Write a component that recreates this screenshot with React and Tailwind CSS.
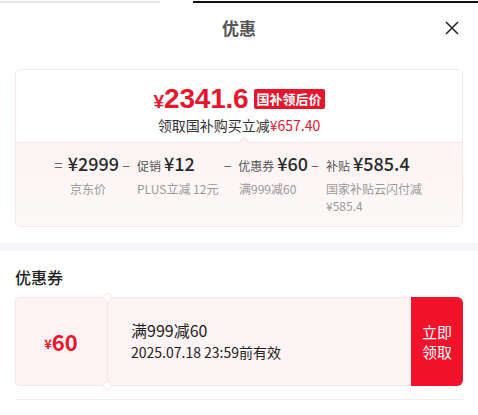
import React from "react";

const F = { fontFamily: '"Noto Sans CJK SC", "Noto Sans", sans-serif' };
const A = { fontFamily: '"Liberation Sans", Arial, sans-serif' };

function Col({ op, label, value, sub, w }) {
  return (
    <div className={`flex flex-col ${w}`}>
      <div className="flex items-baseline whitespace-nowrap text-[#333]">
        <span className="text-[15px] text-[#666] w-[14px] text-center">{op}</span>
        {label && <span className="ml-[4px] text-[12px] text-[#555]">{label}</span>}
        <span className="ml-[3px] text-[18px] leading-[24px] font-medium text-[#2a2a2a]">{value}</span>
      </div>
      <div className="pl-[18px] text-[12px] leading-[17px] mt-[3px] text-[#9a9a9a]">{sub}</div>
    </div>
  );
}

export default function App() {
  return (
    <div style={F} className="w-[478px] h-[415px] bg-white overflow-hidden relative">
      {/* top strip */}
      <div className="flex h-[3px]">
        <div className="w-[160px] h-[2px] mt-[1px] bg-[#e6e6e6]" />
        <div className="w-[33px]" />
        <div className="flex-1 h-[2px] mt-[1px] bg-[#111]" />
      </div>
      {/* header */}
      <div className="h-[50px] flex items-center justify-center relative">
        <span className="text-[17px] font-bold text-[#555]">优惠</span>
        <svg className="absolute right-[18px] top-[17px]" width="16" height="16" viewBox="0 0 16 16">
          <path d="M2 2L14 14M14 2L2 14" stroke="#222" strokeWidth="1.5" />
        </svg>
      </div>
      {/* price card */}
      <div className="mx-[15px] mt-[16px] rounded-[6px] border border-[#f2e6e8] overflow-hidden">
        <div className="h-[72px] bg-white flex flex-col items-center pt-[16px]">
          <div className="flex items-center h-[26px]">
            <span style={A} className="text-[19px] font-bold text-[#e8162c] leading-[18px] mt-[5px]">¥</span>
            <span style={A} className="text-[28px] font-bold text-[#e8162c] leading-[26px] tracking-[-0.2px]">2341.6</span>
            <span className="ml-[5px] bg-[#e8162c] text-white text-[13px] font-bold rounded-[2px] px-[3px] h-[20px] leading-[20px]">国补领后价</span>
          </div>
          <div className="text-[14px] leading-[16px] text-[#333] mt-[5px]">
            领取国补购买立减<span className="text-[#e8162c]">¥657.40</span>
          </div>
        </div>
        <div className="relative h-[84px] bg-gradient-to-b from-[#fdf3f3] to-[#fdf9f9] border-t border-[#f6e8e9] pt-[8px] pl-[36px] flex">
          <div className="absolute left-[224px] -top-[5px] w-[8px] h-[8px] rotate-45 bg-[#fdf3f3] border-l border-t border-[#f6e8e9]" />
          <Col w="w-[67px]" op="=" value="¥2999" sub="京东价" />
          <Col w="w-[102px]" op="–" label="促销" value="¥12" sub="PLUS立减 12元" />
          <Col w="w-[87px]" op="–" label="优惠券" value="¥60" sub="满999减60" />
          <Col w="w-[120px]" op="–" label="补贴" value="¥585.4" sub={<>国家补贴云闪付减<br />¥585.4</>} />
        </div>
      </div>
      {/* gray band */}
      <div className="mt-[16px] h-[8px] bg-[#f5f6fa]" />
      {/* coupons */}
      <div className="px-[15px]">
        <div className="h-[46px] flex items-center text-[16px] font-medium text-[#222] pt-[6px]">优惠券</div>
        <div className="h-[89px] flex">
          <div className="w-[91px] bg-[#fdf3f4] border border-[#f6e6e8] border-r-0 rounded-l-[5px] flex items-center justify-center text-[#e8162c] font-bold">
            <span className="text-[13px] mt-[4px]">¥</span>
            <span className="text-[22px]">60</span>
          </div>
          <div className="relative w-[3px] bg-[#fdf3f4] border-y border-[#f6e6e8]">
            <div className="absolute left-[1px] top-[4px] bottom-[4px] border-l border-[#f3e3e5]" />
            <div className="absolute -left-[3px] -top-[5px] w-[9px] h-[9px] rounded-full bg-white border border-[#f6e6e8]" />
            <div className="absolute -left-[3px] -bottom-[5px] w-[9px] h-[9px] rounded-full bg-white border border-[#f6e6e8]" />
          </div>
          <div className="flex-1 bg-[#fdf4f5] border border-[#f6e6e8] border-l-0 border-r-0 flex flex-col justify-center pl-[22px] pb-[3px]">
            <div className="text-[16px] leading-[22px] text-[#222]">满999减60</div>
            <div className="text-[14px] leading-[20px] text-[#222] mt-[1px]">2025.07.18 23:59前有效</div>
          </div>
          <div className="w-[52px] bg-[#f2122a] rounded-r-[6px] flex items-center justify-center text-white text-[15px] leading-[20px] text-center">
            立即<br />领取
          </div>
        </div>
        <div className="mt-[13px] h-px bg-[#efefef]" />
      </div>
    </div>
  );
}
